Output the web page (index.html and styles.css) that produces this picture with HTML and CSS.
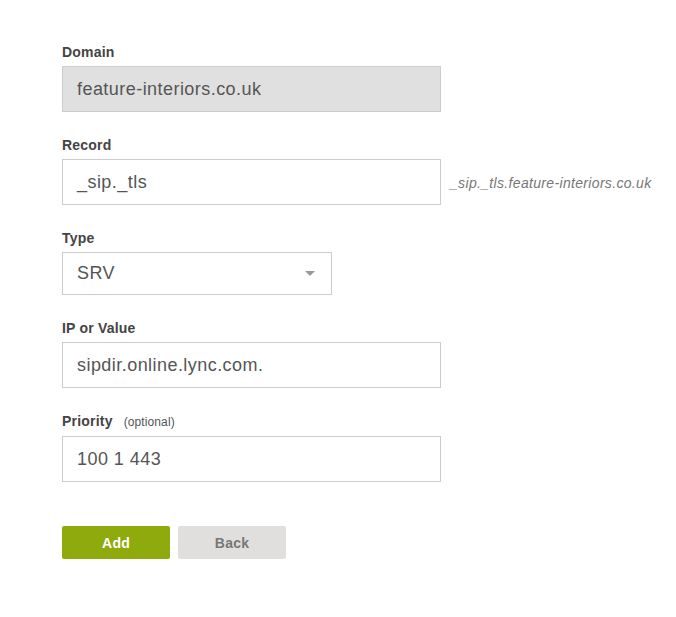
FILE: index.html
```html
<!DOCTYPE html>
<html>
<head>
<meta charset="utf-8">
<link rel="stylesheet" href="styles.css">
</head>
<body>
<form class="form">
  <div class="group">
    <label class="label">Domain</label>
    <div class="input input-disabled">feature-interiors.co.uk</div>
  </div>
  <div class="group">
    <label class="label">Record</label>
    <div class="row">
      <div class="input">_sip._tls</div>
      <span class="hint">_sip._tls.feature-interiors.co.uk</span>
    </div>
  </div>
  <div class="group">
    <label class="label">Type</label>
    <div class="select">
      <span>SRV</span>
      <svg class="caret" width="10" height="5" viewBox="0 0 10 5"><path d="M0 0H10L5 5Z" fill="#999"/></svg>
    </div>
  </div>
  <div class="group">
    <label class="label">IP or Value</label>
    <div class="input">sipdir.online.lync.com.</div>
  </div>
  <div class="group">
    <label class="label">Priority <span class="optional">(optional)</span></label>
    <div class="input">100 1 443</div>
  </div>
  <div class="buttons">
    <button type="button" class="btn btn-add">Add</button>
    <button type="button" class="btn btn-back">Back</button>
  </div>
</form>
</body>
</html>
```
FILE: styles.css
```css
html, body {
  margin: 0;
  padding: 0;
  background: #fff;
}
body {
  font-family: "Liberation Sans", Arial, sans-serif;
  color: #555;
}
.form {
  padding: 44px 0 0 62px;
  display: flex;
  flex-direction: column;
}
.group {
  display: flex;
  flex-direction: column;
  margin-bottom: 25px;
}
.label {
  display: block;
  font-size: 14px;
  line-height: 17px;
  font-weight: bold;
  color: #444;
  margin-bottom: 5px;
  letter-spacing: 0.2px;
}
.optional {
  font-weight: normal;
  font-size: 12px;
  color: #555;
  margin-left: 7px;
  letter-spacing: 0.1px;
}
.row {
  display: flex;
  align-items: center;
  gap: 9px;
}
.input {
  box-sizing: border-box;
  width: 379px;
  height: 46px;
  border: 1px solid #ccc;
  background: #fff;
  padding: 0 14px;
  font-size: 18px;
  line-height: 44px;
  color: #555;
  letter-spacing: 0.45px;
}
.input-disabled {
  background: #e0e0e0;
}
.hint {
  font-style: italic;
  font-size: 14px;
  color: #777;
  padding-top: 2px;
  letter-spacing: 0.33px;
}
.select {
  box-sizing: border-box;
  width: 270px;
  height: 43px;
  border: 1px solid #ccc;
  padding: 0 16px 0 14px;
  font-size: 18px;
  color: #555;
  display: flex;
  align-items: center;
  justify-content: space-between;
  letter-spacing: 0.45px;
}
.caret {
  display: block;
}
.buttons {
  display: flex;
  gap: 8px;
  margin-top: 19px;
}
.btn {
  box-sizing: border-box;
  width: 108px;
  height: 33px;
  border: none;
  border-radius: 2px;
  font-family: "Liberation Sans", Arial, sans-serif;
  font-size: 14px;
  font-weight: bold;
  padding: 0;
  letter-spacing: 0.2px;
}
.btn-add {
  background: #8eaa0c;
  color: #fff;
}
.btn-back {
  background: #e0dfdd;
  color: #777;
}
```
